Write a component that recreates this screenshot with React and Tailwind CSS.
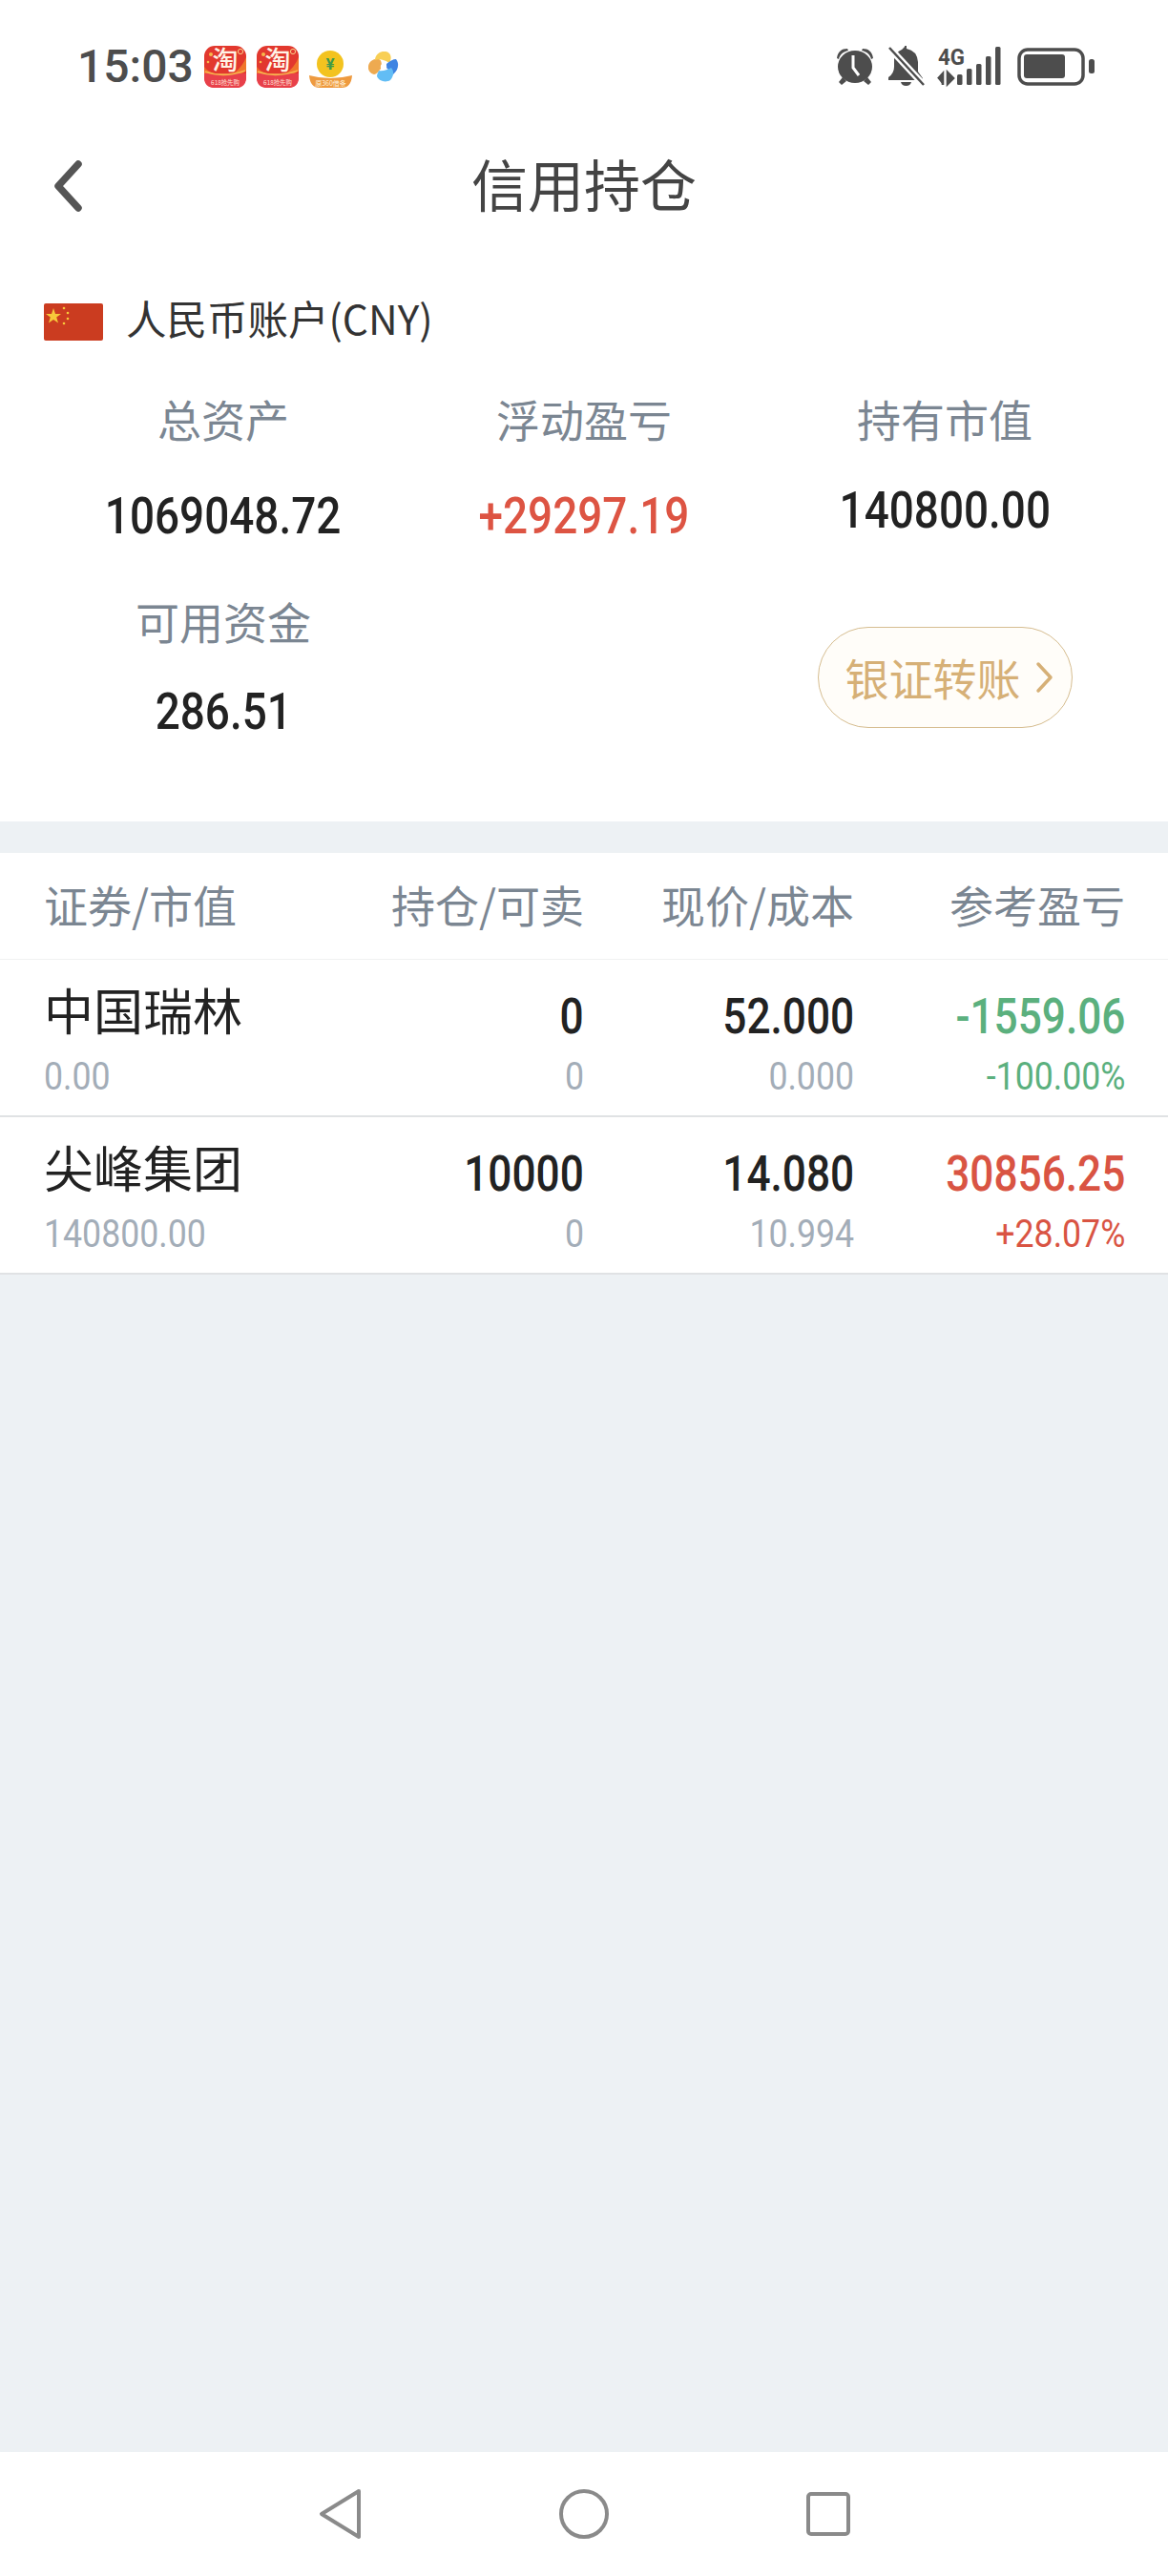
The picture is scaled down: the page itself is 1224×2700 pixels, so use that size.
const CJK = "font-['Noto_Sans_CJK_SC','Noto_Sans',sans-serif]";
const NUM = "font-['Roboto','Noto_Sans_CJK_SC',sans-serif]";

function Taobao() {
  return (
    <svg width="44" height="44" viewBox="0 0 44 44" className="shrink-0 overflow-visible">
      <rect width="44" height="44" rx="11" fill="#e2382e" />
      <path d="M30 30 Q40 22 44 12 V26 Q38 31 30 32Z" fill="#f0762c" />
      <path d="M0 22 Q5 28 12 30 L0 30Z" fill="#ef6a2c" />
      <path d="M0 29 H44 V33 Q44 44 33 44 H11 Q0 44 0 33Z" fill="#e8404a" />
      <path d="M1 27 Q20 34 43 26" stroke="#f7b24c" strokeWidth="1.8" fill="none" />
      <circle cx="38" cy="6" r="2.6" fill="none" stroke="#f9d18a" strokeWidth="1" />
      <circle cx="7" cy="9" r="2" fill="#f6b84b" />
      <circle cx="4" cy="17" r="1.3" fill="#f6b84b" />
      <text x="22" y="25" textAnchor="middle" fontSize="27" fontWeight="500" fill="#fff3e6" fontFamily="Noto Sans CJK SC">淘</text>
      <text x="22" y="41" textAnchor="middle" fontSize="6.4" fill="#ffe3d8" fontFamily="Noto Sans CJK SC">618抢先购</text>
    </svg>
  );
}

function Coin() {
  return (
    <svg width="45" height="44" viewBox="0 0 45 44" className="shrink-0 overflow-visible">
      <circle cx="22" cy="19" r="14" fill="#f3c31f" />
      <text x="22" y="25" textAnchor="middle" fontSize="17" fontWeight="700" fill="#3f9a4a" fontFamily="Roboto">¥</text>
      <path d="M0 31 Q22 37 45 31 Q44 44 34 44 H11 Q1 44 0 31Z" fill="#ee9a3f" />
      <text x="22.5" y="42" textAnchor="middle" fontSize="7" fill="#fff2dc" fontFamily="Noto Sans CJK SC">原360借条</text>
    </svg>
  );
}

function Pinwheel() {
  return (
    <svg width="32" height="32" viewBox="0 0 32 32" className="shrink-0 ml-[17px]">
      <path d="M0 15 C1 10 6 7 11 8 C14 9 14 13 14 17 C11 20 9 24 6 24 C2 23 -1 19 0 15Z" fill="#eeaa50" />
      <path d="M7 9 C7 3 13 -1 18 0 C24 1 25 7 22 12 C19 10 12 7 7 9Z" fill="#f8cf55" />
      <path d="M19 13 C22 10 26 8 29 8 C33 13 31 20 26 24 C23 21 21 19 19 17Z" fill="#3f84e2" />
      <path d="M11 20 C15 21 20 19 24 17 C27 20 27 26 23 30 C18 33 11 31 9 26 C9 24 10 22 11 20Z" fill="#62bdf5" />
      <circle cx="16" cy="16" r="3.2" fill="#fff" />
    </svg>
  );
}

function Alarm() {
  return (
    <svg width="40" height="40" viewBox="0 0 40 40" className="shrink-0">
      <path d="M1 11 C2 4 6 1 12 1 L13 3 C8 4 4 7 3 12Z" fill="#4d4d4d" />
      <path d="M39 11 C38 4 34 1 28 1 L27 3 C32 4 36 7 37 12Z" fill="#4d4d4d" />
      <path d="M7 31 L3 36 L6 39 L11 35Z M33 31 L37 36 L34 39 L29 35Z" fill="#4d4d4d" />
      <ellipse cx="20" cy="20" rx="18" ry="17" fill="#4d4d4d" />
      <path d="M18 8 V21 L24 29" stroke="#fff" strokeWidth="3" fill="none" />
    </svg>
  );
}

function BellOff() {
  return (
    <svg width="38" height="43" viewBox="0 0 38 43" className="shrink-0">
      <path d="M17 1 Q17 -1 19 0 L19 3 Q30 5 31 17 V27 L36 34 V36 H0 V33 Q6 29 6 22 V14 Q7 7 14 4Z" fill="#4d4d4d" />
      <path d="M13 38 H24 Q23 42 18.5 42 Q14 42 13 38Z" fill="#4d4d4d" />
      <path d="M0 1 L38 42" stroke="#fff" strokeWidth="7" />
      <path d="M1 2 L37 41" stroke="#4d4d4d" strokeWidth="2.5" />
    </svg>
  );
}

function Signal() {
  return (
    <svg width="66" height="42" viewBox="0 0 66 42" className="shrink-0 overflow-visible">
      <text x="0" y="19" fontSize="24" fontWeight="700" fill="#4d4d4d" fontFamily="Roboto" textLength="28" lengthAdjust="spacingAndGlyphs">4G</text>
      <path d="M5 40 V28 L0 33.5 M10 27 V39 L16 33 Z" stroke="#4d4d4d" strokeWidth="2.6" fill="#4d4d4d" />
      <rect x="20" y="29" width="5.5" height="11" rx="1.5" fill="#4d4d4d" />
      <rect x="30" y="23" width="5.5" height="17" rx="1.5" fill="#4d4d4d" />
      <rect x="40" y="18" width="5.5" height="22" rx="1.5" fill="#4d4d4d" />
      <rect x="50" y="10" width="5.5" height="30" rx="1.5" fill="#4d4d4d" />
      <rect x="60" y="0" width="5.5" height="40" rx="1.5" fill="#4d4d4d" />
    </svg>
  );
}

function Battery() {
  return (
    <svg width="81" height="40" viewBox="0 0 81 40" className="shrink-0">
      <rect x="2" y="2" width="67" height="36" rx="9" fill="none" stroke="#4d4d4d" strokeWidth="3.5" />
      <rect x="7" y="7" width="43" height="25" rx="3" fill="#4d4d4d" />
      <rect x="75" y="12" width="6" height="15" rx="2.5" fill="#4d4d4d" />
    </svg>
  );
}

function Num({ children, className, origin, scale = "scale-x-[0.85]" }) {
  return <span className={`inline-block ${NUM} ${scale} ${origin} ${className}`}>{children}</span>;
}

function Stat({ label, value, color, valueClass }) {
  return (
    <div className="flex flex-col items-center">
      <div className={`h-[60px] leading-[60px] text-[46px] text-[#7b8692] ${CJK}`}>{label}</div>
      <div className={`h-[60px] leading-[60px] text-[54px] font-medium whitespace-nowrap ${valueClass}`}>
        <Num className={color} origin="origin-center">{value}</Num>
      </div>
    </div>
  );
}

const rows = [
  { name: "中国瑞林", mv: "0.00", qty: "0", avail: "0", price: "52.000", cost: "0.000", pl: "-1559.06", pct: "-100.00%", color: "text-[#5bb07e]" },
  { name: "尖峰集团", mv: "140800.00", qty: "10000", avail: "0", price: "14.080", cost: "10.994", pl: "30856.25", pct: "+28.07%", color: "text-[#d95443]" },
];

function Cell({ top, bottom, topColor = "text-[#222222]", bottomColor = "text-[#a3adb8]" }) {
  return (
    <div className="flex flex-col items-end">
      <div className="h-[70px] leading-[66px] text-[52px] font-medium whitespace-nowrap">
        <Num className={topColor} origin="origin-right" scale="scale-x-[0.85]">{top}</Num>
      </div>
      <div className="mt-[1px] h-[50px] leading-[50px] text-[41px] whitespace-nowrap">
        <Num className={bottomColor} origin="origin-right" scale="scale-x-[0.87]">{bottom}</Num>
      </div>
    </div>
  );
}

export default function App() {
  return (
    <div className="w-[1224px] h-[2700px] flex flex-col bg-[#edf1f4] overflow-hidden">
      <div className="bg-white">
        <div className="h-[140px] flex items-center pl-[81px] pr-[77px] pb-[1px]">
          <span className={`text-[48px] font-medium text-[#4d4d4d] ${NUM} mr-[11px]`}>15:03</span>
          <div className="flex items-center gap-[11px]">
            <Taobao />
            <Taobao />
            <Coin />
          </div>
          <Pinwheel />
          <div className="ml-auto flex items-center">
            <Alarm />
            <div className="ml-[15px]"><BellOff /></div>
            <div className="ml-[14px]"><Signal /></div>
            <div className="ml-[17px]"><Battery /></div>
          </div>
        </div>

        <div className="h-[110px] grid grid-cols-[1fr_auto_1fr] items-center px-[52px]">
          <svg width="36" height="56" viewBox="0 0 36 56" fill="none" className="ml-[2px]">
            <path d="M28 5 L7 28 L28 51" stroke="#555555" strokeWidth="7.5" strokeLinecap="round" strokeLinejoin="round" />
          </svg>
          <div className={`text-[59px] leading-[104px] h-[110px] text-[#444444] ${CJK}`}>信用持仓</div>
          <div />
        </div>

        <div className="mt-[57px] h-[60px] flex items-center pl-[46px]">
          <svg width="62" height="39" viewBox="0 0 62 39" className="shrink-0">
            <rect width="62" height="39" rx="2" fill="#cb3c20" />
            <path d="M10 5 L12 11 L18 11 L13.2 14.6 L15 20.5 L10 17 L5 20.5 L6.8 14.6 L2 11 L8 11Z" fill="#f7c93a" />
            <circle cx="21" cy="5" r="1.3" fill="#f7c93a" />
            <circle cx="25" cy="10" r="1.3" fill="#f7c93a" />
            <circle cx="25" cy="16" r="1.3" fill="#f7c93a" />
            <circle cx="21" cy="21" r="1.3" fill="#f7c93a" />
          </svg>
          <span className={`ml-[24px] pb-[9px] text-[42.5px] leading-[60px] text-[#333333] ${CJK}`}>人民币账户(CNY)</span>
        </div>

        <div className="mt-[41px] px-[45px] pb-[88px] grid grid-cols-3 items-start">
          <Stat label="总资产" value="1069048.72" color="text-[#222222]" valueClass="mt-[40px]" />
          <Stat label="浮动盈亏" value="+29297.19" color="text-[#dd5443]" valueClass="mt-[40px]" />
          <Stat label="持有市值" value="140800.00" color="text-[#222222]" valueClass="mt-[34px]" />
          <div className="mt-[52px]">
            <Stat label="可用资金" value="286.51" color="text-[#222222]" valueClass="mt-[33px]" />
          </div>
          <div />
          <div className="mt-[89px] flex justify-center">
            <div className="w-[267px] h-[106px] rounded-full border-[1.5px] border-[#d6bd90] bg-[#fffdf9] flex items-center pl-[28px]">
              <span className={`text-[46px] leading-[60px] pb-[3px] text-[#d6b077] ${CJK}`}>银证转账</span>
              <svg width="20" height="34" viewBox="0 0 20 34" fill="none" className="ml-[15px]">
                <path d="M3 3 L16 17 L3 31" stroke="#d6b077" strokeWidth="3.5" strokeLinecap="round" strokeLinejoin="round" />
              </svg>
            </div>
          </div>
        </div>
      </div>

      <div className="mt-[33px] bg-white">
        <div className={`h-[112px] border-b border-[#f0f1f2] pl-[46px] pr-[45px] pb-[4px] grid grid-cols-[285px_281px_283px_284px] items-center text-[46px] text-[#7b8692] ${CJK}`}>
          <div>证券/市值</div>
          <div className="text-right">持仓/可卖</div>
          <div className="text-right">现价/成本</div>
          <div className="text-right">参考盈亏</div>
        </div>
        {rows.map((r) => (
          <div key={r.name} className="h-[165px] border-b-2 border-[#e0e2e4] pl-[46px] pr-[45px] pt-[24px] grid grid-cols-[285px_281px_283px_284px] items-start">
            <div className="flex flex-col items-start">
              <div className={`h-[70px] leading-[56px] text-[52px] text-[#222222] ${CJK}`}>{r.name}</div>
              <div className="mt-[1px] h-[50px] leading-[50px] text-[41px] whitespace-nowrap">
                <Num className="text-[#a3adb8]" origin="origin-left" scale="scale-x-[0.87]">{r.mv}</Num>
              </div>
            </div>
            <Cell top={r.qty} bottom={r.avail} />
            <Cell top={r.price} bottom={r.cost} />
            <Cell top={r.pl} bottom={r.pct} topColor={r.color} bottomColor={r.color} />
          </div>
        ))}
      </div>

      <div className="mt-auto h-[130px] bg-white flex items-center justify-center">
        <svg width="48" height="56" viewBox="0 0 48 56" fill="none" className="mr-[205px]">
          <path d="M43 4 L4 28 L43 52 Z" stroke="#8a8a8a" strokeWidth="4" strokeLinejoin="round" />
        </svg>
        <svg width="52" height="52" viewBox="0 0 52 52" fill="none" className="mr-[206px]">
          <circle cx="26" cy="26" r="24" stroke="#8a8a8a" strokeWidth="4" />
        </svg>
        <svg width="48" height="48" viewBox="0 0 48 48" fill="none">
          <rect x="3" y="3" width="42" height="42" rx="3" stroke="#8a8a8a" strokeWidth="4" />
        </svg>
      </div>
    </div>
  );
}
